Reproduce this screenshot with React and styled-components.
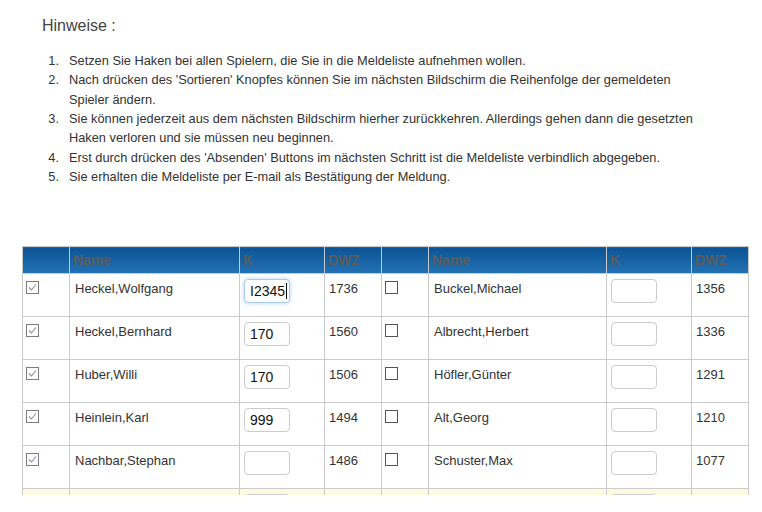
import React from "react";
import styled, { createGlobalStyle } from "styled-components";

const GlobalStyle = createGlobalStyle`
  html, body { margin: 0; padding: 0; background: #fff; }
  body { font-family: "Liberation Sans", Arial, sans-serif; color: #333; }
`;

const Page = styled.div`
  height: 495px;
  overflow: hidden;
  padding: 0 0 0 22px;
  box-sizing: border-box;
`;

const Notes = styled.section`
  padding-left: 20px;
  width: 665px;
`;

const Title = styled.h3`
  margin: 16px 0 0;
  font-size: 16px;
  line-height: 19px;
  font-weight: normal;
  color: #444;
`;

const List = styled.ol`
  margin: 16px 0 0;
  padding: 0;
  list-style: none;
  font-size: 12.8px;
  line-height: 19.33px;
  color: #333;
`;

const Item = styled.li`
  display: grid;
  grid-template-columns: 17px 1fr;
  column-gap: 10px;
`;

const Num = styled.span`
  text-align: right;
`;

const Table = styled.table`
  margin-top: 60px;
  border-collapse: collapse;
  table-layout: fixed;
  width: 727px;
  font-size: 13px;
`;

const Th = styled.th`
  height: 26px;
  padding: 0 3px;
  text-align: left;
  vertical-align: middle;
  font-size: 14px;
  font-weight: bold;
  color: #5c5c5c;
  background: linear-gradient(#0b5394, #2372b4);
  border: 1px solid #c8c8c8;
`;

const Row = styled.tr`
  height: 43px;
  background: ${(p) => (p.$highlight ? "#fcfbe2" : "#fff")};
`;

const Td = styled.td`
  padding: ${(p) => p.$pad || "7px 5px"};
  vertical-align: top;
  border: 1px solid #cbcbcb;
  color: #333;
  line-height: 15px;
  white-space: nowrap;
  overflow: hidden;
`;

const Box = styled.span`
  display: inline-block;
  width: 13px;
  height: 13px;
  box-sizing: border-box;
  border: 1px solid ${(p) => (p.$checked ? "#7c7c7c" : "#555")};
  background: #fff;
  vertical-align: top;
  position: relative;
  svg { position: absolute; left: 0; top: 0; }
`;

const Field = styled.span`
  display: inline-block;
  width: 46px;
  height: 24px;
  box-sizing: border-box;
  margin-top: -2px;
  padding: 0 5px;
  border: 1px solid ${(p) => (p.$focused ? "#a9cbe9" : "#cccccc")};
  border-radius: 4px;
  box-shadow: ${(p) => (p.$focused ? "0 0 4px rgba(102,175,233,0.55)" : "none")};
  background: #fff;
  font-size: 14px;
  line-height: 22px;
  color: #111;
  white-space: nowrap;
`;

const Caret = styled.span`
  display: inline-block;
  width: 1px;
  height: 16px;
  background: #000;
  vertical-align: -3px;
  margin-left: 1px;
`;

function Check({ checked }) {
  return (
    <Box $checked={checked}>
      {checked && (
        <svg width="11" height="11" viewBox="0 0 11 11">
          <polyline
            points="2,5.5 4.5,8 9,2.5"
            fill="none"
            stroke="#7d90ae"
            strokeWidth="1.1"
          />
        </svg>
      )}
    </Box>
  );
}

const notes = [
  "Setzen Sie Haken bei allen Spielern, die Sie in die Meldeliste aufnehmen wollen.",
  "Nach drücken des 'Sortieren' Knopfes können Sie im nächsten Bildschirm die Reihenfolge der gemeldeten Spieler ändern.",
  "Sie können jederzeit aus dem nächsten Bildschirm hierher zurückkehren. Allerdings gehen dann die gesetzten Haken verloren und sie müssen neu beginnen.",
  "Erst durch drücken des 'Absenden' Buttons im nächsten Schritt ist die Meldeliste verbindlich abgegeben.",
  "Sie erhalten die Meldeliste per E-mail als Bestätigung der Meldung.",
];

const rows = [
  [{ c: true, n: "Heckel,Wolfgang", k: "I2345", f: true, d: "1736" }, { c: false, n: "Buckel,Michael", k: "", d: "1356" }],
  [{ c: true, n: "Heckel,Bernhard", k: "170", d: "1560" }, { c: false, n: "Albrecht,Herbert", k: "", d: "1336" }],
  [{ c: true, n: "Huber,Willi", k: "170", d: "1506" }, { c: false, n: "Höfler,Günter", k: "", d: "1291" }],
  [{ c: true, n: "Heinlein,Karl", k: "999", d: "1494" }, { c: false, n: "Alt,Georg", k: "", d: "1210" }],
  [{ c: true, n: "Nachbar,Stephan", k: "", d: "1486" }, { c: false, n: "Schuster,Max", k: "", d: "1077" }],
  [{ c: false, n: "", k: "", d: "" }, { c: false, n: "", k: "", d: "" }],
];

function Cells({ p }) {
  return (
    <>
      <Td $pad="7px 3px">
        <Check checked={p.c} />
      </Td>
      <Td>{p.n}</Td>
      <Td $pad="7px 4px">
        <Field $focused={p.f}>
          {p.k}
          {p.f && <Caret />}
        </Field>
      </Td>
      <Td $pad="7px 4px">{p.d}</Td>
    </>
  );
}

export default function App() {
  return (
    <Page>
      <GlobalStyle />
      <Notes>
        <Title>Hinweise :</Title>
        <List>
          {notes.map((t, i) => (
            <Item key={i}>
              <Num>{i + 1}.</Num>
              <span>{t}</span>
            </Item>
          ))}
        </List>
      </Notes>
      <Table>
        <colgroup>
          <col style={{ width: 47 }} />
          <col style={{ width: 170 }} />
          <col style={{ width: 85 }} />
          <col style={{ width: 57 }} />
          <col style={{ width: 47 }} />
          <col style={{ width: 178 }} />
          <col style={{ width: 85 }} />
          <col style={{ width: 57 }} />
        </colgroup>
        <thead>
          <tr>
            <Th />
            <Th>Name</Th>
            <Th>K</Th>
            <Th>DWZ</Th>
            <Th />
            <Th>Name</Th>
            <Th>K</Th>
            <Th>DWZ</Th>
          </tr>
        </thead>
        <tbody>
          {rows.map((r, i) => (
            <Row key={i} $highlight={i === 5}>
              <Cells p={r[0]} />
              <Cells p={r[1]} />
            </Row>
          ))}
        </tbody>
      </Table>
    </Page>
  );
}
